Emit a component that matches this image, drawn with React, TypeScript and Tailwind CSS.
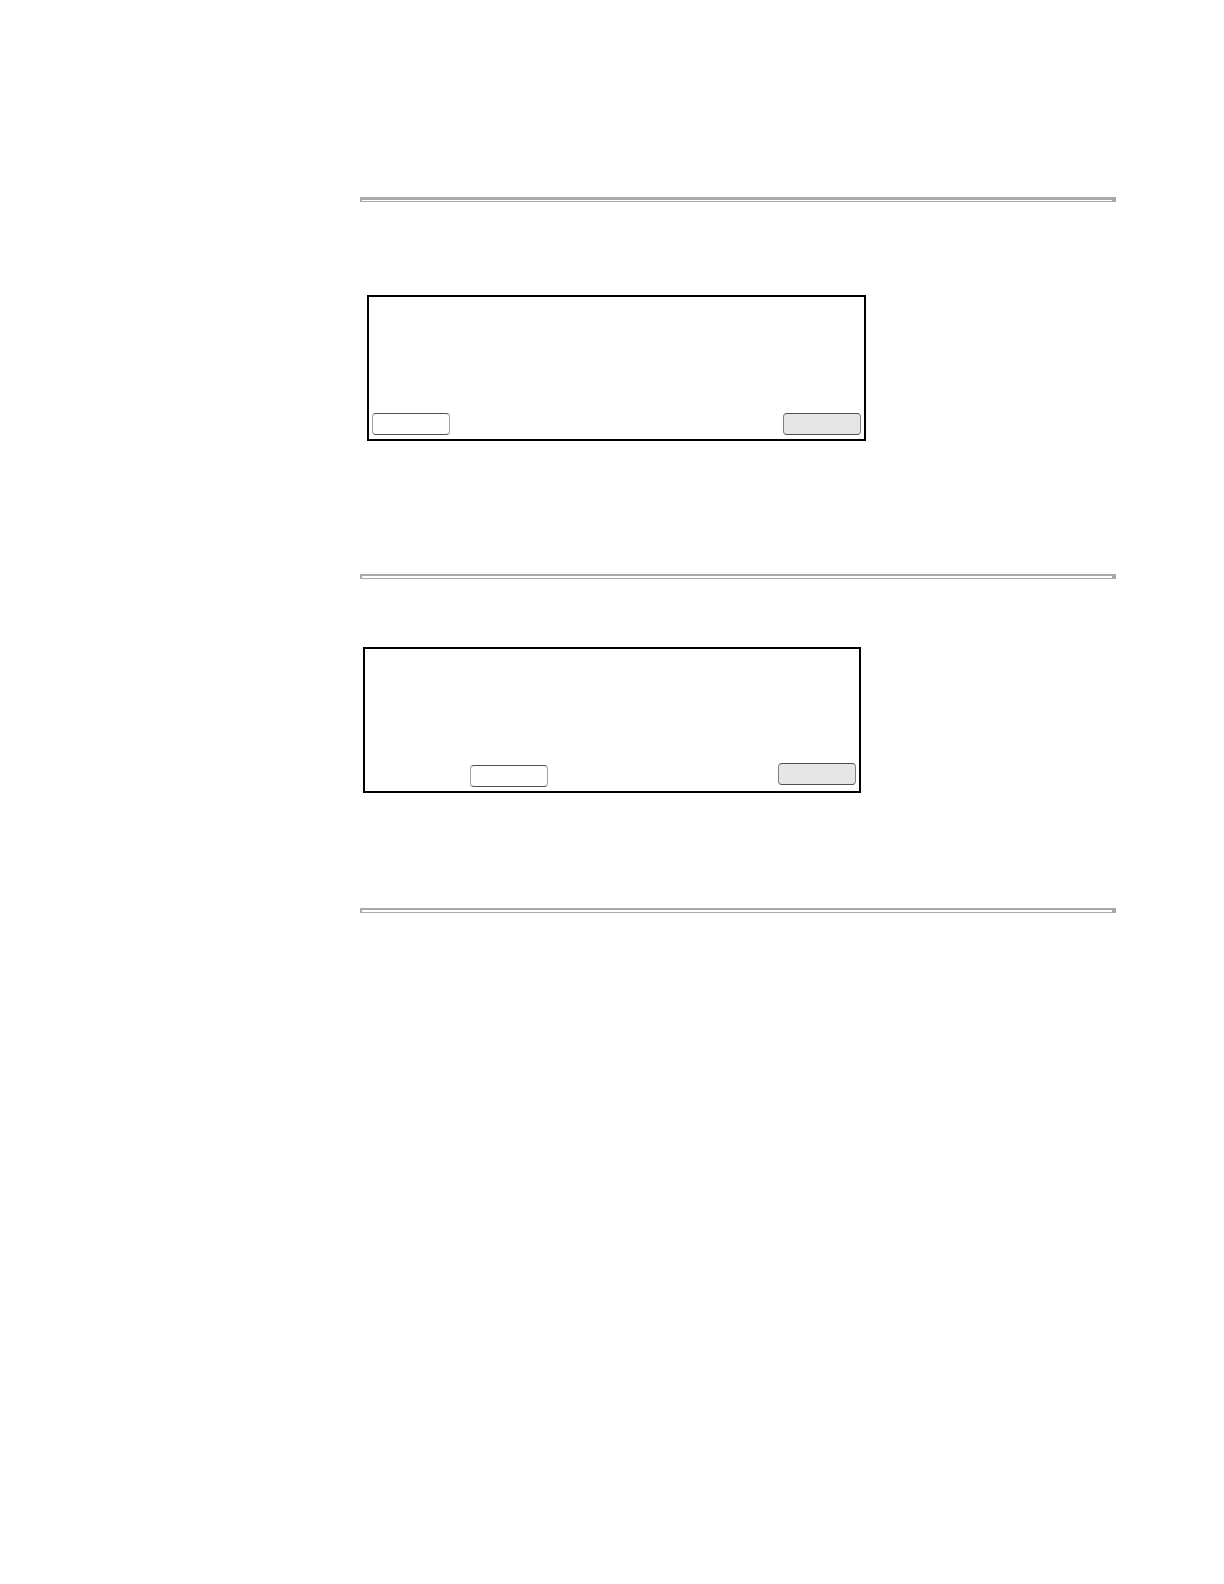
function Rule({ thick = false }: { thick?: boolean }) {
  return (
    <hr
      className={
        (thick ? "border-t-[3px]" : "border-t-2") +
        " h-[5px] w-full border-r-4 border-b border-l-2 border-[#a9a9a9] bg-white"
      }
    />
  );
}

function SoftKey({ label, filled = false }: { label: string; filled?: boolean }) {
  return (
    <button
      type="button"
      aria-label={label}
      className={
        (filled ? "border-x-[#808080] bg-[#e6e6e6]" : "border-x-[#a0a0a0] bg-white") +
        " h-[22px] w-[78px] rounded border border-y-[#505050]"
      }
    />
  );
}

export default function App() {
  return (
    <main className="min-h-screen bg-white pt-[197px] pr-[108px] pl-[360px]">
      <Rule thick />
      <section
        aria-label="First display"
        className="mt-[93px] ml-[7px] flex h-[146px] w-full max-w-[499px] items-end justify-between border-2 border-black pr-[3px] pb-1 pl-[3px]"
      >
        <SoftKey label="Left key" />
        <SoftKey label="Right key" filled />
      </section>
      <div className="mt-[133px]">
        <Rule />
      </div>
      <section
        aria-label="Second display"
        className="mt-[68px] ml-[3px] flex h-[146px] w-full max-w-[498px] items-end justify-between border-2 border-black pr-[3px] pb-1 pl-[105px]"
      >
        <SoftKey label="Middle key" />
        <div className="flex pb-[2px]">
          <SoftKey label="Right key" filled />
        </div>
      </section>
      <div className="mt-[115px]">
        <Rule />
      </div>
    </main>
  );
}
